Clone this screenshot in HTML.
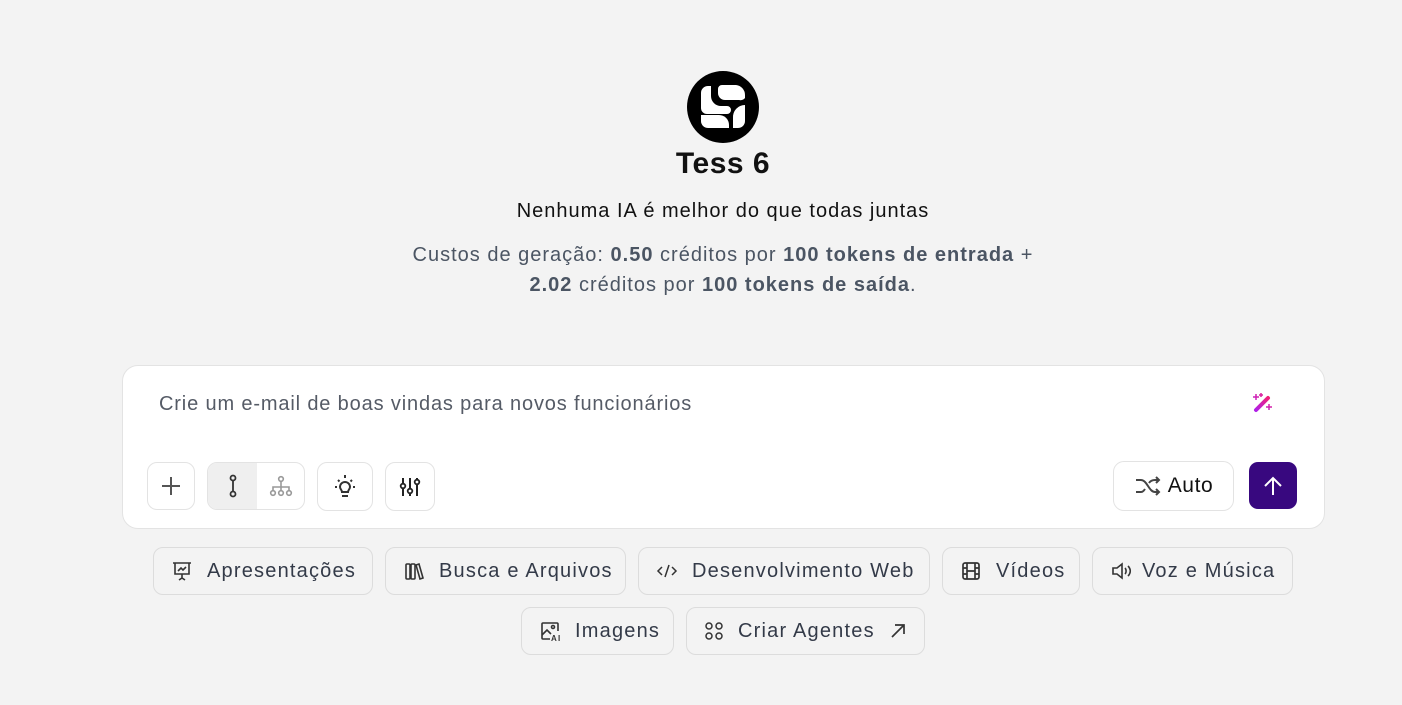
<!DOCTYPE html>
<html><head><meta charset="utf-8"><style>
*{box-sizing:border-box;margin:0;padding:0}
body{width:1402px;height:705px;background:#f3f3f3;font-family:"Liberation Sans",Arial,sans-serif;position:relative;overflow:hidden}
.abs{position:absolute}
.c{left:0;width:1446px;text-align:center}
.card{left:122px;top:365px;width:1203px;height:164px;background:#fff;border:1px solid #e3e3e3;border-radius:16px}
.btn{position:absolute;border:1px solid #e3e3e3;border-radius:10px;background:#fff;display:flex;align-items:center;justify-content:center}
.chip{position:absolute;height:48px;border:1px solid #dcdcdc;border-radius:10px;background:#f3f3f3;display:flex;align-items:center;font-size:20px;letter-spacing:1.2px;color:#333a48;padding-left:17px;white-space:nowrap}
.chip svg{margin-right:14px;flex:none}
</style></head><body>
<svg class="abs" style="left:687px;top:71px" width="72" height="72" viewBox="0 0 72 72">
<circle cx="36" cy="36" r="36" fill="#000"/>
<path d="M14 22a7 7 0 0 1 7-7h3v10a10 10 0 0 0 10 10h6a4 4 0 0 1 0 8H20a6 6 0 0 1-6-6z" fill="#fff"/>
<path d="M31 18a4 4 0 0 1 4-4h14a10 10 0 0 1 9 10l-0 3a6 6 0 0 1-6 2h-14a7 7 0 0 1-7-7z" fill="#fff"/>
<path d="M14 44h18a10 10 0 0 1 10 10v3H21a7 7 0 0 1-7-7z" fill="#fff"/>
<path d="M58 34v16a7 7 0 0 1-7 7h-5v-10a12 12 0 0 1 12-13z" fill="#fff"/>
</svg>
<div class="abs c" style="top:147px;font-size:30px;font-weight:bold;color:#111;letter-spacing:0.5px">Tess 6</div>
<div class="abs c" style="top:200px;font-size:20px;letter-spacing:1px;color:#111">Nenhuma IA é melhor do que todas juntas</div>
<div class="abs c" style="top:240px;font-size:20px;letter-spacing:1px;color:#4b5563;line-height:30px">Custos de geração: <b>0.50</b> créditos por <b>100 tokens de entrada</b> +<br><b>2.02</b> créditos por <b>100 tokens de saída</b>.</div>
<div class="abs card"></div>
<div class="abs" style="left:159px;top:393px;font-size:20px;letter-spacing:0.85px;color:#555b66">Crie um e-mail de boas vindas para novos funcionários</div>
<svg class="abs" style="left:1252px;top:392px" width="22" height="22" viewBox="0 0 22 22"><defs><linearGradient id="g" x1="0" y1="1" x2="1" y2="0"><stop offset="0" stop-color="#b020e8"/><stop offset="1" stop-color="#f0207a"/></linearGradient></defs><path d="M4 18L16 6" stroke="url(#g)" stroke-width="4" stroke-linecap="round"/><path d="M4 2v6M1 5h6M9 1v4M7 3h4M17 12v6M14 15h6" stroke="url(#g)" stroke-width="1.5"/></svg>
<div class="btn" style="left:147px;top:462px;width:48px;height:48px"><svg width="22" height="22"><path d="M11 2v18M2 11h18" stroke="#555" stroke-width="2"/></svg></div>
<div class="btn" style="left:207px;top:462px;width:98px;height:48px;justify-content:flex-start"><div style="width:49px;height:46px;background:#efefef;border-radius:9px 0 0 9px;display:flex;align-items:center;justify-content:center"><svg width="12" height="24"><circle cx="6" cy="4" r="2.5" fill="none" stroke="#333" stroke-width="1.8"/><circle cx="6" cy="20" r="2.5" fill="none" stroke="#333" stroke-width="1.8"/><path d="M6 6.5v11" stroke="#333" stroke-width="1.8"/></svg></div><svg style="margin-left:12px" width="24" height="22"><g fill="none" stroke="#999" stroke-width="1.6"><circle cx="12" cy="4" r="2.3"/><circle cx="4" cy="18" r="2.3"/><circle cx="12" cy="18" r="2.3"/><circle cx="20" cy="18" r="2.3"/><path d="M12 6v10M4 16v-4h16v4"/></g></svg></div>
<div class="btn" style="left:317px;top:462px;width:56px;height:49px"><svg width="28" height="28" viewBox="0 0 28 28"><g fill="none" stroke="#333" stroke-width="2"><path d="M9 14a5 5 0 1 1 10 0c0 2-2 3-2 5h-6c0-2-2-3-2-5z"/><path d="M11 23h6"/><path d="M14 2v3M4 14h2M22 14h2M7 7l1.5 1.5M21 7l-1.5 1.5"/></g></svg></div>
<div class="btn" style="left:385px;top:462px;width:50px;height:49px"><svg width="22" height="22" viewBox="0 0 22 22"><g fill="none" stroke="#222" stroke-width="2"><path d="M4 2v18M11 2v18M18 2v18"/></g><g fill="#fff" stroke="#222" stroke-width="1.8"><circle cx="4" cy="10" r="2.3"/><circle cx="11" cy="15" r="2.3"/><circle cx="18" cy="6" r="2.3"/></g></svg></div>
<div class="btn" style="left:1113px;top:461px;width:121px;height:50px;border-radius:11px;font-size:21px;letter-spacing:0.6px;color:#111"><svg width="28" height="22" viewBox="0 0 28 22" style="margin-right:6px"><g fill="none" stroke="#444" stroke-width="2"><path d="M2 5h5c6 0 8 12 14 12h4M2 17h5c2 0 3-1.5 4-3M15 8c1-1.5 3-3 6-3h4M22 2l3 3-3 3M22 14l3 3-3 3"/></g></svg>Auto</div>
<div class="abs" style="left:1249px;top:462px;width:48px;height:47px;background:#38087f;border-radius:9px;display:flex;align-items:center;justify-content:center"><svg width="22" height="22"><path d="M11 20V3M3 11l8-8 8 8" fill="none" stroke="#fff" stroke-width="2"/></svg></div>

<div class="chip" style="left:153px;top:547px;width:220px"><svg width="22" height="22" viewBox="0 0 22 22"><g fill="none" stroke="#333" stroke-width="1.6"><path d="M2 3h18M4 3v11h14V3M11 14v4M8 20l3-2 3 2M7 11l3-3 2 2 3-3"/></g></svg>Apresentações</div>
<div class="chip" style="left:385px;top:547px;width:241px"><svg width="22" height="22" viewBox="0 0 22 22"><g fill="none" stroke="#333" stroke-width="1.6"><rect x="3" y="4" width="4" height="15" rx="1"/><rect x="8" y="4" width="4" height="15" rx="1"/><path d="M13 5l3-1 4 14-3 1z"/></g></svg>Busca e Arquivos</div>
<div class="chip" style="left:638px;top:547px;width:292px"><svg width="22" height="22" viewBox="0 0 22 22"><g fill="none" stroke="#333" stroke-width="1.5"><path d="M6 7l-4 4 4 4M16 7l4 4-4 4M13 5l-4 12"/></g></svg>Desenvolvimento Web</div>
<div class="chip" style="left:942px;top:547px;width:138px"><svg width="22" height="22" viewBox="0 0 22 22"><g fill="none" stroke="#333" stroke-width="1.7"><rect x="3" y="3" width="16" height="16" rx="2"/><path d="M7 3v16M15 3v16M3 8h4M3 14h4M15 8h4M15 14h4M7 11h8"/></g></svg>Vídeos</div>
<div class="chip" style="left:1092px;top:547px;width:201px"><svg width="22" height="22" viewBox="0 0 22 22" style="margin-right:10px"><g fill="none" stroke="#333" stroke-width="1.6"><path d="M3 8h4l5-4v14l-5-4H3z"/><path d="M15 8c1.5 1.5 1.5 4.5 0 6M18 6c3 3 3 7 0 10"/></g></svg>Voz e Música</div>
<div class="chip" style="left:521px;top:607px;width:153px"><svg width="22" height="22" viewBox="0 0 22 22"><g fill="none" stroke="#333" stroke-width="1.6"><path d="M11 19H4a1 1 0 0 1-1-1V4a1 1 0 0 1 1-1h14a1 1 0 0 1 1 1v7"/><path d="M3 15l5-5 4 4"/><circle cx="14" cy="7" r="1.5"/></g><text x="12" y="21" font-size="8" font-weight="bold" fill="#333" font-family="Liberation Sans">AI</text></svg>Imagens</div>
<div class="chip" style="left:686px;top:607px;width:239px"><svg width="20" height="20" viewBox="0 0 20 20"><g fill="none" stroke="#333" stroke-width="1.5"><circle cx="5" cy="5" r="3"/><circle cx="15" cy="5" r="3"/><circle cx="5" cy="15" r="3"/><circle cx="15" cy="15" r="3"/></g></svg>Criar Agentes<svg width="18" height="18" viewBox="0 0 18 18" style="margin-left:14px;margin-right:0"><path d="M3 15L15 3M6 3h9v9" fill="none" stroke="#333" stroke-width="1.7"/></svg></div>
</body></html>
